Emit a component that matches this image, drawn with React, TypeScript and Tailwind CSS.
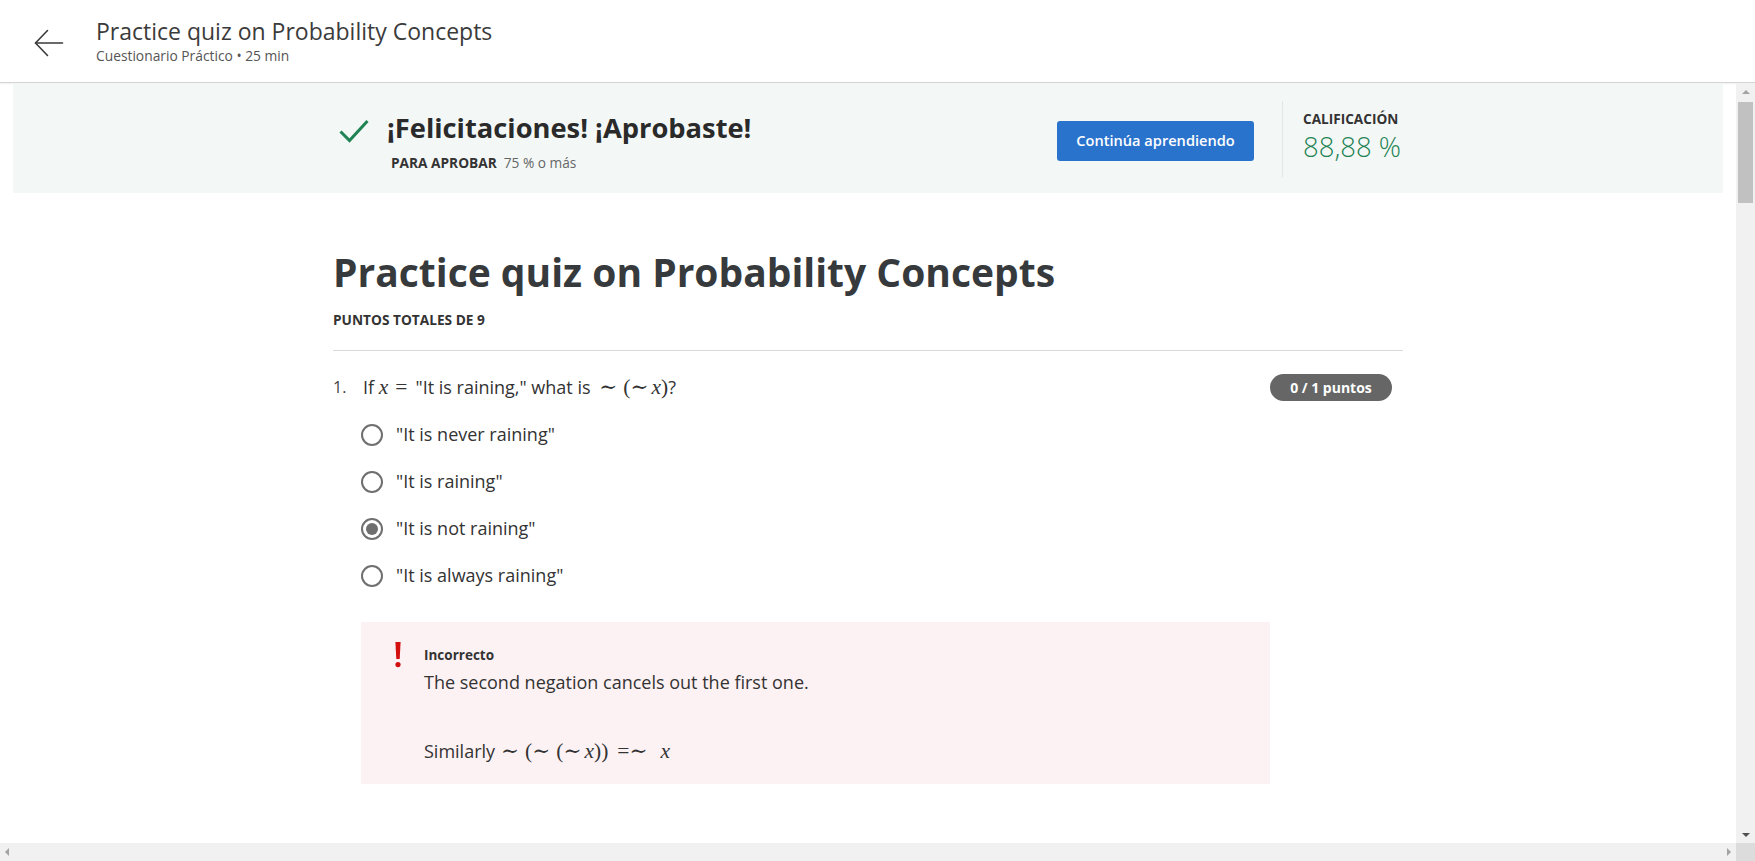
import React from 'react';

// opciones del quiz
const options = [
  { label: '"It is never raining"', checked: false },
  { label: '"It is raining"', checked: false },
  { label: '"It is not raining"', checked: true },
  { label: '"It is always raining"', checked: false },
];

// texto matemático (imita KaTeX)
const Mx = ({ children }: { children: React.ReactNode }) => (
  <span className="font-['Liberation_Serif','DejaVu_Serif',serif] italic text-[21.5px] leading-none">{children}</span>
);
const Mo = ({ children, cls = '' }: { children: React.ReactNode; cls?: string }) => (
  <span className={`font-['Liberation_Serif','DejaVu_Serif',serif] text-[21.5px] leading-none ${cls}`}>
    {children}
  </span>
);

const Radio = ({ checked }: { checked: boolean }) => (
  <span className="w-[22px] h-[22px] rounded-full border-2 border-[#6f6f6f] flex items-center justify-center shrink-0 bg-white">
    {checked && <span className="w-[12px] h-[12px] rounded-full bg-[#6f6f6f]"></span>}
  </span>
);

const App: React.FC = () => {
  return (
    <div className="w-full h-[861px] flex flex-col bg-white overflow-hidden font-['Open_Sans',sans-serif] text-[#333]">
      {/* HEADER */}
      <header className="h-[83px] shrink-0 border-b border-[#d4d4d4] shadow-[0_1px_2px_rgba(0,0,0,0.06)] flex items-center pl-[34px]">
        <svg width="30" height="28" viewBox="0 0 30 28" fill="none" stroke="#3a3a3a" strokeWidth="1.6" strokeLinecap="round" strokeLinejoin="round" className="mt-[4px]">
          <path d="M28.5 14H1.5" />
          <path d="M13.5 1.5L1.5 14L13.5 26.5" />
        </svg>
        <div className="ml-[32px] flex flex-col">
          <span className="text-[23px] leading-[30px] text-[#3b3b3b]">Practice quiz on Probability Concepts</span>
          <span className="text-[13.8px] leading-[20px] text-[#555]">Cuestionario Práctico • 25 min</span>
        </div>
      </header>

      <div className="flex-1 flex min-h-0">
        {/* CONTENIDO */}
        <main className="flex-1 overflow-hidden">
          {/* Banner aprobado */}
          <div className="mx-[13px] mt-[1px] h-[109px] bg-[#f3f8f7]">
            <div className="mx-auto w-[1070px] h-full flex items-center">
              <div className="flex-1 flex items-start pl-[6px] mt-[6px]">
                <svg width="30" height="24" viewBox="0 0 30 24" fill="none" stroke="#1f8354" strokeWidth="3" className="mt-[8px]">
                  <path d="M1.5 12.5L10.5 21.5L28.5 2" />
                </svg>
                <div className="ml-[18px] flex flex-col">
                  <span className="text-[27.3px] leading-[34px] font-bold text-[#2a2a2a]">¡Felicitaciones! ¡Aprobaste!</span>
                  <span className="mt-[8px] text-[13.7px] leading-[20px] pl-[4px]">
                    <span className="font-bold text-[#333]">PARA APROBAR</span>
                    <span className="ml-[7px] text-[#666]">75 % o más</span>
                  </span>
                </div>
              </div>
              <button className="mt-[4px] w-[197px] h-[40px] rounded-[3px] bg-[#2a73cc] text-white text-[14.6px] font-semibold">
                Continúa aprendiendo
              </button>
              <div className="ml-[28px] w-px h-[76px] bg-[#e3e6e6]"></div>
              <div className="ml-[20px] w-[100px] flex flex-col mt-[-2px]">
                <span className="text-[13.6px] leading-[19px] font-bold text-[#333]">CALIFICACIÓN</span>
                <span className="text-[27.5px] leading-[38px] font-light text-[#1f8354]">88,88 %</span>
              </div>
            </div>
          </div>

          {/* Columna principal */}
          <div className="mx-auto w-[1070px]">
            <h1 className="mt-[55px] text-[39px] leading-[48px] font-bold text-[#373a3c]">Practice quiz on Probability Concepts</h1>
            <div className="mt-[14px] text-[13.7px] leading-[20px] font-bold text-[#333]">PUNTOS TOTALES DE 9</div>
            <div className="mt-[20px] border-t border-[#d9d9d9]"></div>

            {/* Pregunta 1 */}
            <div className="mt-[22px] h-[28px] flex items-center justify-between pr-[11px]">
              <div className="flex items-center">
                <span className="w-[30px] text-[16px] text-[#444]">1.</span>
                <span className="text-[18px] leading-[28px] flex items-baseline whitespace-pre">
                  <span>If </span>
                  <Mx>x</Mx>
                  <Mo cls="ml-[7px] mr-[8px]">=</Mo>
                  <span>"It is raining," what is </span>
                  <Mo cls="ml-[4px] mr-[6px]">∼</Mo>
                  <Mo>(</Mo>
                  <Mo cls="mr-[3px]">∼</Mo>
                  <Mx>x</Mx>
                  <Mo>)</Mo>
                  <span>?</span>
                </span>
              </div>
              <span className="w-[122px] h-[27px] rounded-full bg-[#666] text-white text-[14px] font-bold flex items-center justify-center">
                0 / 1 puntos
              </span>
            </div>

            <div className="mt-[10px] pl-[28px]">
              {options.map((opt) => (
                <div key={opt.label} className="h-[47px] flex items-center">
                  <Radio checked={opt.checked} />
                  <span className="ml-[13px] text-[18px] text-[#333]">{opt.label}</span>
                </div>
              ))}
            </div>

            {/* Retroalimentación */}
            <div className="mt-[23px] ml-[28px] w-[909px] bg-[#fdf2f3] pt-[20px] pl-[34px] pb-[19px] flex items-start">
              <svg width="6" height="26" viewBox="0 0 6 26" className="shrink-0">
                <path d="M0.4 0H5.6L4.7 17H1.3Z" fill="#d30f0f" />
                <circle cx="3" cy="22.6" r="2.6" fill="#d30f0f" />
              </svg>
              <div className="ml-[23px] mt-[3px] flex flex-col">
                <span className="text-[13.5px] leading-[20px] font-bold text-[#333]">Incorrecto</span>
                <p className="mt-[4px] text-[18px] leading-[27px] text-[#333]">The second negation cancels out the first one.</p>
                <p className="mt-[42px] text-[18px] leading-[27px] text-[#333] flex items-baseline whitespace-pre">
                  <span>Similarly</span>
                  <Mo cls="ml-[6px] mr-[6px]">∼</Mo>
                  <Mo>(</Mo>
                  <Mo cls="mr-[6px]">∼</Mo>
                  <Mo>(</Mo>
                  <Mo cls="mr-[3px]">∼</Mo>
                  <Mx>x</Mx>
                  <Mo>))</Mo>
                  <Mo cls="ml-[9px]">=</Mo>
                  <Mo cls="mr-[13px]">∼</Mo>
                  <Mx>x</Mx>
                </p>
              </div>
            </div>
          </div>
        </main>

        {/* Barra de desplazamiento vertical */}
        <div className="w-[19px] shrink-0 bg-[#f1f1f1] flex flex-col items-center">
          <div className="h-[17px] flex items-center justify-center">
            <span className="w-0 h-0 border-l-[4px] border-r-[4px] border-b-[4px] border-l-transparent border-r-transparent border-b-[#a3a3a3]"></span>
          </div>
          <div className="mt-[2px] w-[15px] h-[101px] bg-[#c1c1c1]"></div>
          <div className="flex-1"></div>
          <div className="h-[17px] flex items-center justify-center">
            <span className="w-0 h-0 border-l-[4px] border-r-[4px] border-t-[4px] border-l-transparent border-r-transparent border-t-[#505050]"></span>
          </div>
        </div>
      </div>

      {/* Barra de desplazamiento horizontal */}
      <div className="h-[18px] shrink-0 flex">
        <div className="flex-1 bg-[#f1f1f1] flex items-center justify-between px-[5px]">
          <span className="w-0 h-0 border-t-[4px] border-b-[4px] border-r-[4px] border-t-transparent border-b-transparent border-r-[#a3a3a3]"></span>
          <span className="w-0 h-0 border-t-[4px] border-b-[4px] border-l-[4px] border-t-transparent border-b-transparent border-l-[#a3a3a3]"></span>
        </div>
        <div className="w-[19px] bg-[#dcdcdc]"></div>
      </div>
    </div>
  );
};

export default App;
